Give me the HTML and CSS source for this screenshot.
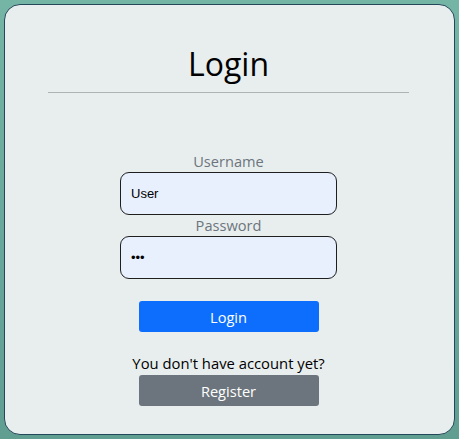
FILE: index.html
```html
<!DOCTYPE html>
<html>
<head>
<meta charset="utf-8">
<link rel="stylesheet" href="styles.css">
</head>
<body>
<div class="card">
  <h1 class="title">Login</h1>
  <hr class="rule">
  <form class="form">
    <label class="label" for="u">Username</label>
    <input class="field" id="u" type="text" value="User">
    <label class="label" for="p">Password</label>
    <input class="field" id="p" type="password" value="123">
    <button type="button" class="btn btn-primary">Login</button>
    <p class="note">You don't have account yet?</p>
    <button type="button" class="btn btn-secondary">Register</button>
  </form>
</div>
</body>
</html>
```
FILE: styles.css
```css
html, body {
  margin: 0;
  padding: 0;
  height: 100%;
}
body {
  background: linear-gradient(180deg, #74b5a6 0%, #5f9e91 100%);
  padding: 4px;
  box-sizing: border-box;
  font-family: "Open Sans", "Noto Sans", sans-serif;
}
.card {
  box-sizing: border-box;
  height: 431px;
  background: #e8eeee;
  border: 1px solid #24475a;
  border-radius: 16px;
  padding: 0 45px 0 43px;
}
.title {
  margin: 0;
  padding-top: 37px;
  font-weight: 400;
  font-size: 32px;
  line-height: 44px;
  text-align: center;
  color: #000;
}
.rule {
  margin: 6px 0 0;
  border: 0;
  border-top: 1px solid #aeb3b3;
  height: 0;
}
.form {
  display: flex;
  flex-direction: column;
  align-items: center;
  padding-top: 58px;
}
.label {
  font-size: 14.6px;
  line-height: 21px;
  color: #6c757d;
}
.field {
  box-sizing: border-box;
  width: 217px;
  height: 43px;
  margin: 0;
  padding: 0 10px;
  border: 1px solid #1f1f1f;
  border-radius: 9px;
  background: #e8f0fe;
  font-family: "Liberation Sans", Arial, sans-serif;
  font-size: 13px;
  color: #000;
  outline: none;
}
.btn {
  box-sizing: border-box;
  width: 180px;
  height: 31px;
  border: 0;
  border-radius: 3px;
  color: #fff;
  font-family: "Open Sans", "Noto Sans", sans-serif;
  font-size: 14.6px;
  line-height: 20px;
  padding: 0;
}
.btn-primary {
  background: #0d6efd;
  margin-top: 22px;
}
.btn-secondary {
  background: #6c757d;
}
.note {
  margin: 21px 0 2px;
  font-size: 14.8px;
  line-height: 20px;
  color: #000;
}
```
